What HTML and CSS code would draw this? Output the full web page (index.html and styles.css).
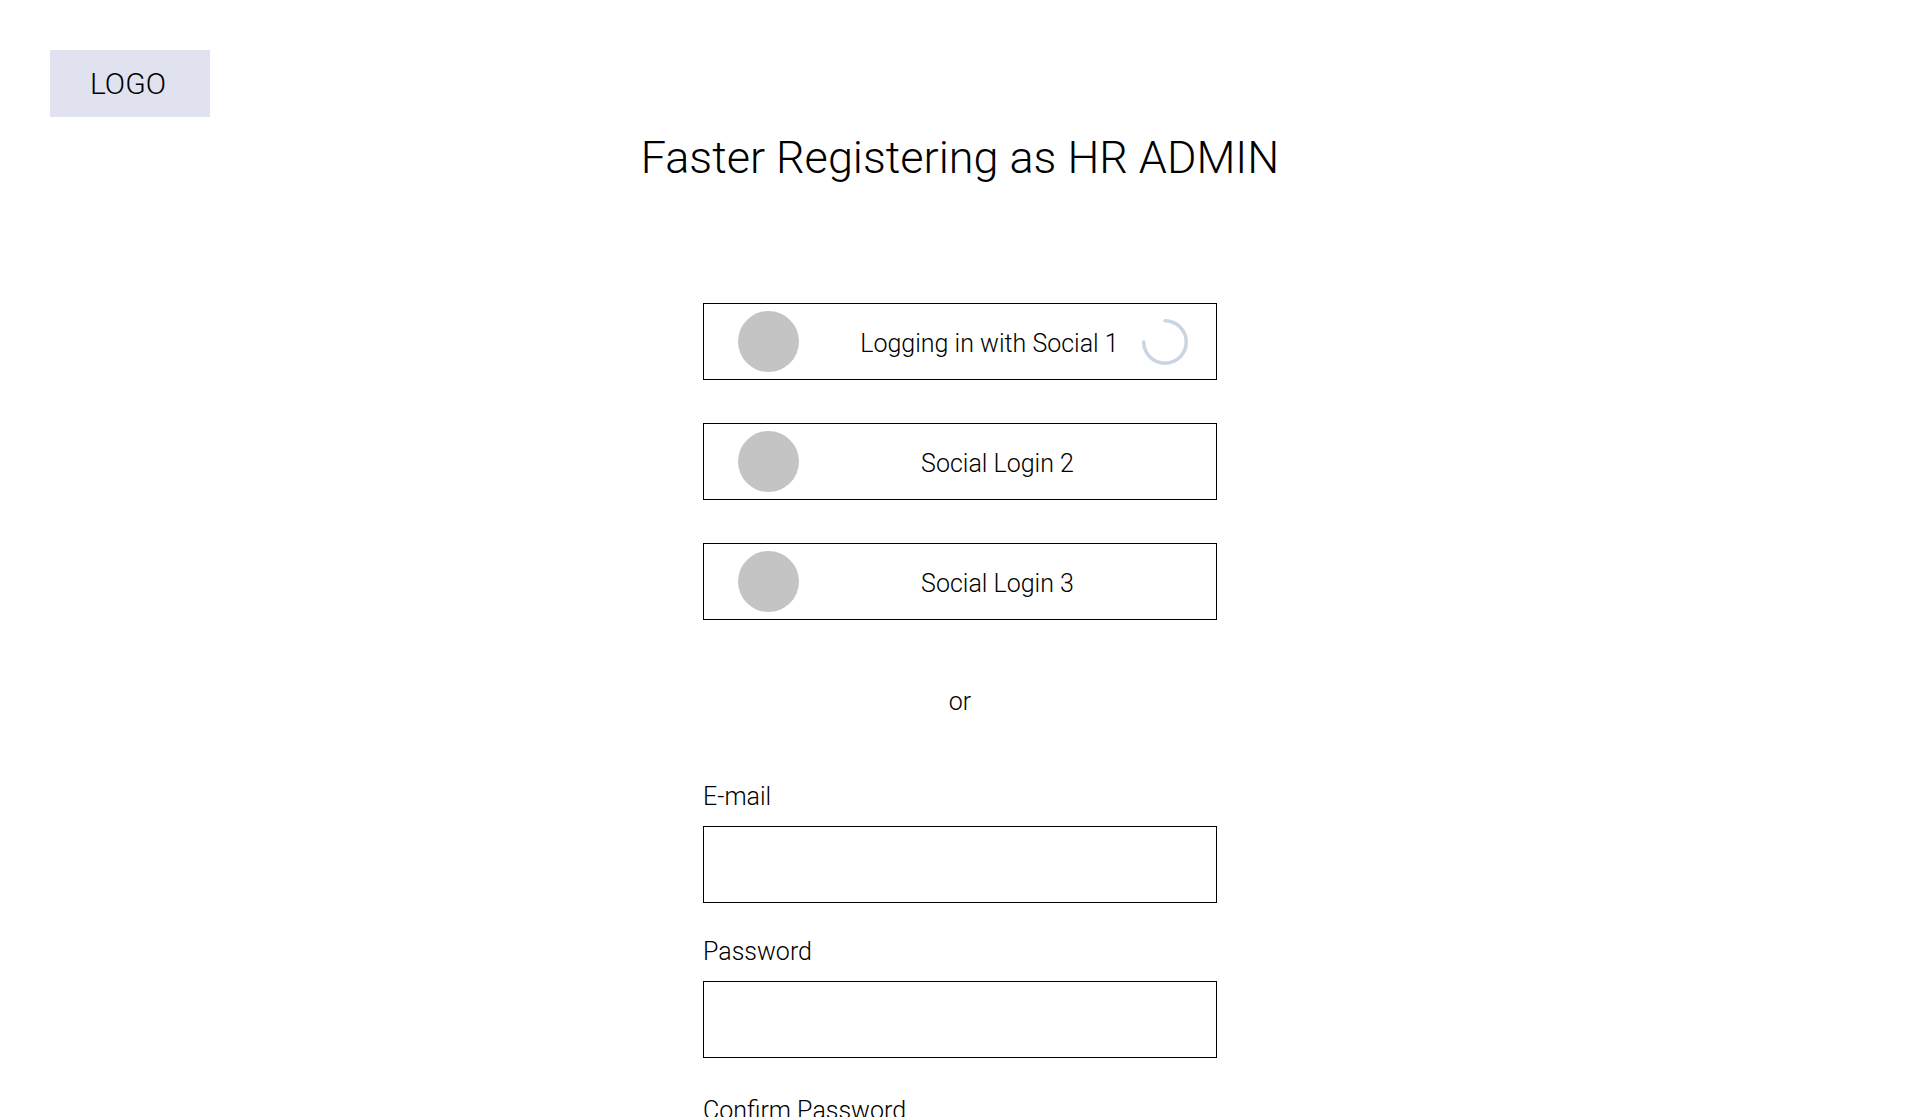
FILE: index.html
```
<!DOCTYPE html>
<html lang="en">
<head>
<meta charset="utf-8">
<meta name="viewport" content="width=device-width, initial-scale=1">
<title>Register as HR Admin</title>
<link rel="stylesheet" href="styles.css">
</head>
<body>
<header class="header"><a class="logo" href="#">LOGO</a></header>
<main class="main">
  <h1 class="title">Faster Registering as HR ADMIN</h1>
  <div class="socials">
    <button class="social social-loading" type="button">
      <span class="avatar"></span>
      <span class="social-text">Logging in with Social 1</span>
      <svg class="spinner" viewBox="0 0 46 46" aria-hidden="true"><path d="M23 1.75A21.25 21.25 0 1 1 1.75 23" fill="none" stroke="#cbd5e1" stroke-width="3.5" stroke-linecap="round"/></svg>
    </button>
    <button class="social" type="button">
      <span class="avatar"></span>
      <span class="social-text">Social Login 2</span>
    </button>
    <button class="social" type="button">
      <span class="avatar"></span>
      <span class="social-text">Social Login 3</span>
    </button>
  </div>
  <p class="or">or</p>
  <form class="form">
    <div class="credentials">
      <div class="field">
        <label for="email">E-mail</label>
        <input id="email" type="email">
      </div>
      <div class="field">
        <label for="password">Password</label>
        <input id="password" type="password">
      </div>
    </div>
    <div class="field">
      <label for="confirm">Confirm Password</label>
      <input id="confirm" type="password">
    </div>
  </form>
</main>
</body>
</html>
```
FILE: styles.css
```
* {
  box-sizing: border-box;
}

html {
  scrollbar-width: none;
}

body {
  margin: 0;
  background: #fff;
  color: #000;
  font-family: Roboto, "Liberation Sans", sans-serif;
  font-size: 25px;
  font-weight: 300;
  line-height: 30px;
}

.header {
  display: flex;
  padding: 50px 50px 0;
}

.logo {
  width: 160px;
  padding: 16px 40px;
  background: #e0e2ef;
  color: #000;
  font-size: 30px;
  line-height: 35px;
  text-decoration: none;
}

.main {
  display: flex;
  flex-direction: column;
  align-items: center;
  padding: 14px 24px 50px;
}

.title {
  margin: 0;
  font-size: 45px;
  font-weight: 300;
  line-height: 53px;
  text-align: center;
}

.socials,
.form {
  display: flex;
  flex-direction: column;
  width: 100%;
  max-width: 514px;
}

.socials {
  gap: 43px;
  margin-top: 119px;
}

.social {
  display: grid;
  grid-template-columns: 61px 1fr 46px;
  align-items: center;
  height: 77px;
  padding: 0 28px 0 34px;
  border: 1px solid #000;
  background: #fff;
  color: #000;
  font: inherit;
}

.avatar {
  width: 61px;
  height: 61px;
  border-radius: 50%;
  background: #c4c4c4;
}

.social-text {
  padding: 4px 0 0 54px;
}

.social-loading .social-text {
  padding-right: 16px;
}

.spinner {
  width: 46px;
  height: 46px;
}

.or {
  margin: 67px 0 65px;
}

.form {
  gap: 38px;
}

.credentials {
  display: flex;
  flex-direction: column;
  gap: 34px;
}

.field {
  display: flex;
  flex-direction: column;
  gap: 14px;
}

.field input {
  height: 77px;
  padding: 0 20px;
  border: 1px solid #000;
  border-radius: 0;
  background: #fff;
  font: inherit;
}
```
